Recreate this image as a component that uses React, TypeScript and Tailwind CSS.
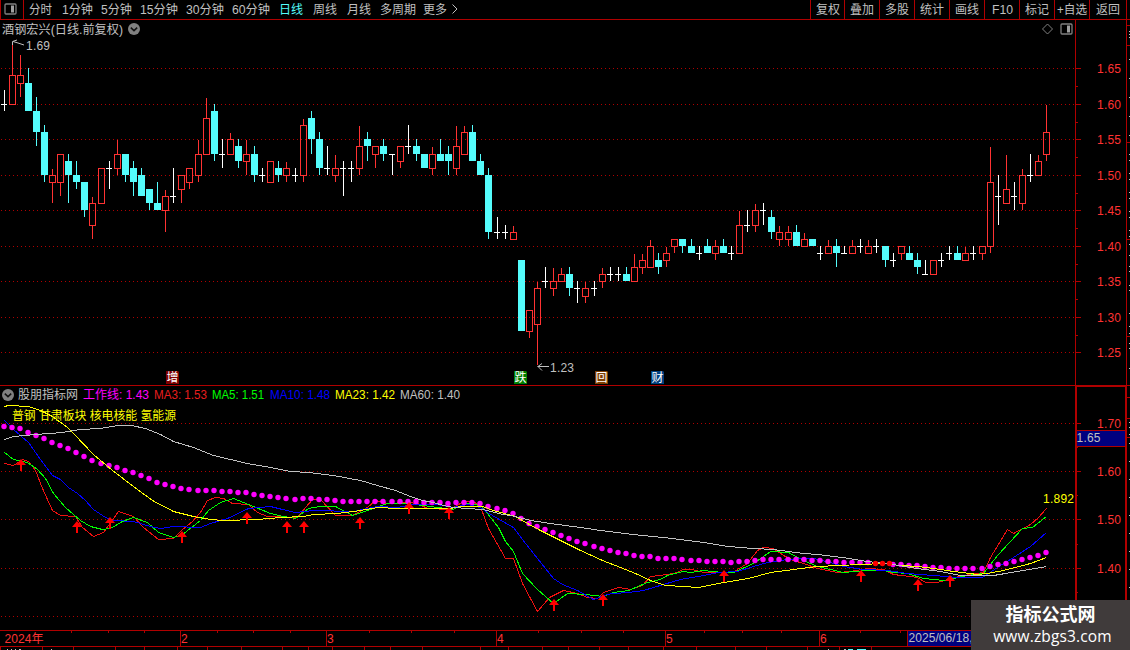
import { Fragment } from 'react';
import type { ReactNode } from 'react';

type Kind = 'up' | 'down' | 'flat';
type Candle = [x: number, high: number, top: number, bottom: number, low: number, kind: Kind];

const LINE = '#b00000';
const UP = '#ff3232';
const DOWN = '#54fcfc';

const PERIODS = [
  { label: '分时', width: 'w-[33px]', text: 23 },
  { label: '1分钟', width: 'w-[39px]', text: 31 },
  { label: '5分钟', width: 'w-[39px]', text: 31 },
  { label: '15分钟', width: 'w-[46px]', text: 38 },
  { label: '30分钟', width: 'w-[46px]', text: 38 },
  { label: '60分钟', width: 'w-[47px]', text: 38 },
  { label: '日线', width: 'w-[34px]', text: 24, active: true },
  { label: '周线', width: 'w-[34px]', text: 24 },
  { label: '月线', width: 'w-[33px]', text: 24 },
  { label: '多周期', width: 'w-[43px]', text: 36 },
  { label: '更多', width: 'w-[27px]', text: 24 },
];

const TOOLS = [
  { label: '复权', width: 'w-[34px]', text: 24 },
  { label: '叠加', width: 'w-[35px]', text: 24 },
  { label: '多股', width: 'w-[35px]', text: 24 },
  { label: '统计', width: 'w-[35px]', text: 24 },
  { label: '画线', width: 'w-[35px]', text: 24 },
  { label: 'F10', width: 'w-[35px]', text: 21 },
  { label: '标记', width: 'w-[35px]', text: 24 },
  { label: '+自选', width: 'w-[35px]', text: 30 },
  { label: '返回', width: 'w-[37px]', text: 24 },
];

const CANDLES: Candle[] = [
  [4, 90, 104, 104, 111, 'flat'],
  [12, 42, 75, 105, 105, 'up'],
  [20, 55, 75, 84, 97, 'up'],
  [28, 68, 83, 111, 111, 'down'],
  [36, 97, 111, 132, 146, 'down'],
  [44, 125, 132, 175, 182, 'down'],
  [52, 169, 175, 183, 203, 'up'],
  [60, 154, 154, 183, 196, 'up'],
  [68, 154, 161, 175, 203, 'down'],
  [76, 161, 175, 182, 189, 'down'],
  [84, 182, 182, 210, 217, 'down'],
  [92, 197, 203, 226, 239, 'up'],
  [101, 168, 168, 204, 204, 'up'],
  [109, 161, 168, 168, 189, 'flat'],
  [117, 140, 154, 169, 175, 'up'],
  [125, 154, 154, 175, 182, 'down'],
  [133, 161, 168, 182, 196, 'down'],
  [141, 168, 175, 196, 196, 'down'],
  [149, 189, 189, 203, 210, 'down'],
  [157, 182, 203, 210, 210, 'down'],
  [165, 190, 196, 211, 232, 'up'],
  [173, 168, 196, 196, 203, 'flat'],
  [181, 175, 175, 190, 203, 'up'],
  [189, 168, 168, 183, 189, 'up'],
  [198, 140, 154, 176, 182, 'up'],
  [206, 98, 118, 155, 155, 'up'],
  [214, 104, 111, 154, 161, 'down'],
  [222, 139, 154, 154, 168, 'flat'],
  [230, 133, 139, 155, 155, 'up'],
  [238, 139, 146, 161, 168, 'down'],
  [246, 140, 154, 162, 175, 'up'],
  [254, 146, 154, 175, 182, 'down'],
  [262, 168, 175, 175, 182, 'flat'],
  [270, 161, 161, 183, 183, 'up'],
  [278, 161, 168, 175, 182, 'down'],
  [286, 162, 168, 176, 182, 'up'],
  [295, 168, 175, 175, 182, 'flat'],
  [303, 119, 125, 176, 182, 'up'],
  [311, 111, 118, 139, 154, 'down'],
  [319, 132, 139, 168, 175, 'down'],
  [327, 146, 168, 168, 175, 'flat'],
  [335, 155, 168, 176, 182, 'up'],
  [343, 161, 168, 168, 196, 'flat'],
  [351, 161, 168, 168, 182, 'flat'],
  [359, 126, 146, 169, 175, 'up'],
  [367, 132, 139, 146, 161, 'down'],
  [375, 146, 146, 155, 168, 'up'],
  [383, 139, 146, 154, 161, 'down'],
  [392, 154, 154, 154, 175, 'flat'],
  [400, 146, 146, 162, 168, 'up'],
  [408, 125, 146, 146, 154, 'flat'],
  [416, 139, 146, 154, 161, 'down'],
  [424, 154, 154, 168, 168, 'down'],
  [432, 147, 154, 169, 175, 'up'],
  [440, 139, 154, 161, 161, 'down'],
  [448, 146, 154, 161, 175, 'down'],
  [456, 126, 146, 169, 175, 'up'],
  [464, 126, 132, 155, 155, 'up'],
  [472, 125, 132, 161, 161, 'down'],
  [480, 154, 161, 175, 175, 'down'],
  [488, 168, 175, 232, 239, 'down'],
  [497, 217, 232, 232, 239, 'flat'],
  [505, 225, 232, 232, 239, 'flat'],
  [513, 226, 232, 240, 240, 'up'],
  [521, 260, 260, 331, 331, 'down'],
  [529, 310, 310, 332, 338, 'up'],
  [537, 282, 288, 325, 365, 'up'],
  [545, 267, 281, 281, 288, 'flat'],
  [553, 268, 281, 289, 296, 'up'],
  [561, 268, 274, 282, 282, 'up'],
  [569, 267, 274, 288, 296, 'down'],
  [577, 281, 288, 288, 303, 'flat'],
  [585, 282, 288, 297, 303, 'up'],
  [594, 281, 288, 288, 296, 'flat'],
  [602, 268, 274, 282, 288, 'up'],
  [610, 267, 274, 274, 281, 'flat'],
  [618, 267, 274, 274, 281, 'flat'],
  [626, 267, 274, 281, 281, 'down'],
  [634, 254, 267, 282, 282, 'up'],
  [642, 254, 260, 268, 274, 'up'],
  [650, 240, 246, 268, 268, 'up'],
  [658, 253, 260, 267, 274, 'down'],
  [666, 247, 253, 261, 267, 'up'],
  [674, 239, 239, 247, 253, 'up'],
  [682, 239, 239, 246, 253, 'down'],
  [691, 239, 246, 253, 253, 'down'],
  [699, 246, 253, 253, 260, 'flat'],
  [707, 239, 246, 253, 253, 'down'],
  [715, 240, 246, 254, 260, 'up'],
  [723, 239, 246, 253, 253, 'down'],
  [731, 246, 253, 253, 260, 'flat'],
  [739, 211, 225, 254, 254, 'up'],
  [747, 210, 225, 225, 232, 'flat'],
  [755, 204, 210, 226, 232, 'up'],
  [763, 203, 210, 210, 225, 'flat'],
  [771, 210, 217, 232, 239, 'down'],
  [779, 226, 232, 240, 246, 'up'],
  [788, 226, 232, 240, 246, 'up'],
  [796, 225, 232, 246, 246, 'down'],
  [804, 233, 239, 247, 247, 'up'],
  [812, 239, 239, 246, 246, 'down'],
  [820, 246, 253, 253, 260, 'flat'],
  [828, 240, 246, 254, 254, 'up'],
  [836, 239, 246, 253, 267, 'down'],
  [844, 246, 253, 253, 254, 'flat'],
  [852, 240, 246, 254, 254, 'up'],
  [860, 239, 246, 246, 253, 'flat'],
  [868, 240, 246, 254, 254, 'up'],
  [876, 239, 246, 246, 253, 'flat'],
  [885, 246, 246, 260, 267, 'down'],
  [893, 253, 260, 260, 267, 'flat'],
  [901, 246, 246, 254, 260, 'up'],
  [909, 246, 253, 260, 260, 'down'],
  [917, 253, 260, 267, 274, 'down'],
  [925, 260, 274, 274, 275, 'flat'],
  [933, 260, 260, 275, 275, 'up'],
  [941, 253, 260, 260, 267, 'flat'],
  [949, 246, 253, 253, 260, 'flat'],
  [957, 246, 253, 260, 260, 'down'],
  [965, 247, 253, 261, 261, 'up'],
  [973, 246, 253, 253, 260, 'flat'],
  [982, 246, 246, 254, 260, 'up'],
  [990, 147, 182, 247, 253, 'up'],
  [998, 175, 196, 196, 225, 'flat'],
  [1006, 155, 189, 204, 204, 'up'],
  [1014, 182, 196, 196, 210, 'flat'],
  [1022, 169, 175, 204, 210, 'up'],
  [1030, 154, 175, 175, 182, 'flat'],
  [1038, 155, 161, 176, 176, 'up'],
  [1046, 105, 132, 155, 161, 'up'],
];

const PRICE_TICKS: [number, string][] = [
  [68, '1.65'],
  [104, '1.60'],
  [139, '1.55'],
  [175, '1.50'],
  [210, '1.45'],
  [246, '1.40'],
  [281, '1.35'],
  [317, '1.30'],
  [352, '1.25'],
];

const MA_TICKS: [number, string][] = [
  [423, '1.70'],
  [471, '1.60'],
  [519, '1.50'],
  [568, '1.40'],
];

const EVENTS = [
  { x: 166, label: '增', fill: '#7f0000' },
  { x: 514, label: '跌', fill: '#007f00' },
  { x: 595, label: '回', fill: '#7f3f00' },
  { x: 651, label: '财', fill: '#003f7f' },
];

const LEGEND = [
  { label: '股朋指标网', color: 'text-[#c0c0c0]', width: 'w-[65px]', text: 60 },
  { label: '工作线: 1.43', color: 'text-[#ff00ff]', width: 'w-[71px]', text: 66 },
  { label: 'MA3: 1.53', color: 'text-[#e81e1e]', width: 'w-[58px]', text: 53 },
  { label: 'MA5: 1.51', color: 'text-[#00ff00]', width: 'w-[58px]', text: 52 },
  { label: 'MA10: 1.48', color: 'text-[#0000ff]', width: 'w-[65px]', text: 60 },
  { label: 'MA23: 1.42', color: 'text-[#ffff00]', width: 'w-[65px]', text: 60 },
  { label: 'MA60: 1.40', color: 'text-[#c0c0c0]', width: 'w-[65px]', text: 60 },
];

const MA3 =
  '4,463 13,465 22,459 28,461 35,470 42,488 52,510 60,515 75,516 82,527 93,536 103,532 118,511 133,516 143,527 158,539 173,538 182,529 192,521 200,512 207,500 215,497 223,498 232,503 248,504 257,512 267,516 297,517 305,507 312,499 320,499 335,515 352,515 367,507 375,500 387,503 407,502 417,503 427,508 450,509 463,501 473,501 480,506 488,528 505,558 513,558 522,583 537,611 549,597 563,590 577,593 587,597 597,598 603,592 618,587 630,589 642,585 650,576 667,574 677,572 682,569 692,569 703,572 732,572 747,563 757,550 763,547 773,548 783,555 793,560 803,563 817,568 837,572 850,571 867,568 883,569 893,574 917,577 925,582 937,582 947,579 963,575 983,572 990,557 1007,529 1013,533 1030,524 1038,517 1046,508';
const MA5 =
  '4,452 13,459 27,462 37,469 45,478 53,493 65,507 80,520 90,526 102,529 110,528 122,521 133,517 147,522 158,532 173,537 182,534 200,520 208,510 220,502 233,498 253,506 270,513 283,516 295,518 308,508 320,506 335,506 352,515 370,509 387,503 407,503 430,506 452,509 467,503 480,505 487,513 498,527 505,541 513,551 522,573 537,589 553,603 567,593 585,594 603,596 613,592 628,590 647,582 660,579 667,575 682,571 690,572 703,570 722,572 733,572 753,563 770,551 788,552 803,560 817,566 830,569 843,572 867,570 883,570 893,572 907,573 923,578 943,580 967,575 983,573 997,555 1022,528 1032,527 1046,516';
const MA10 =
  '4,420 13,429 28,442 40,459 52,475 60,479 68,487 77,493 85,500 93,509 105,517 113,520 133,521 150,526 160,528 173,526 200,527 210,523 227,518 248,508 270,506 282,509 295,512 313,510 353,511 367,508 377,506 397,507 413,504 437,504 452,507 467,504 480,507 487,512 497,518 513,527 522,539 537,558 553,578 562,584 577,590 593,599 607,594 613,593 628,592 643,590 663,584 680,579 703,575 718,572 737,571 753,566 767,562 787,559 800,558 813,558 830,562 843,566 863,569 887,570 907,573 933,575 957,577 982,577 1000,565 1013,557 1030,546 1046,532';
const MA23 =
  '4,406 8,405 28,406 40,410 52,416 67,427 73,433 93,454 112,470 133,486 152,500 173,511 193,516 210,519 223,520 257,519 280,517 303,516 313,514 337,513 360,510 377,507 397,508 450,508 460,506 482,506 493,510 515,516 527,523 540,530 560,540 580,550 602,560 620,567 635,573 650,580 665,585 683,586 698,587 718,583 748,578 770,572 793,569 817,566 860,564 883,563 900,565 918,566 933,568 953,571 977,574 987,573 1003,570 1030,563 1046,557';
const MA60 =
  '4,439 13,436 24,435 35,434 62,432 80,429 100,428 117,425 131,425 145,428 160,434 173,441 193,447 213,455 247,463 270,467 290,471 308,472 333,475 360,480 377,485 395,490 410,496 422,500 433,502 443,505 453,507 482,509 503,514 515,516 530,520 550,523 580,527 600,530 632,534 663,537 703,542 728,546 753,548 773,549 803,553 817,554 842,557 867,561 892,564 917,568 940,571 960,575 993,575 1017,571 1046,566';

// One value per candle
const WORK_LINE = [
  426, 427, 428, 432, 435, 438, 442, 445, 448, 452, 456, 460, 463, 465, 467, 470, 472, 475, 478, 482,
  484, 486, 488, 489, 490, 490, 490, 491, 491, 492, 492, 494, 495, 496, 497, 498, 499, 498, 498, 499,
  499, 500, 501, 501, 501, 501, 501, 501, 501, 501, 501, 501, 502, 502, 502, 503, 502, 502, 502, 503,
  506, 508, 510, 513, 518, 523, 526, 529, 532, 535, 538, 541, 543, 546, 548, 550, 552, 553, 555, 556,
  556, 558, 558, 558, 559, 560, 560, 561, 561, 561, 562, 561, 561, 560, 559, 559, 559, 559, 559, 559,
  560, 560, 561, 561, 562, 562, 562, 562, 563, 563, 564, 564, 565, 565, 566, 567, 567, 568, 568, 568,
  568, 568, 566, 564, 563, 561, 559, 557, 555, 552,
];

const ARROWS = [
  [21, 459], [77, 521], [110, 517], [182, 531], [247, 512], [287, 521], [304, 521], [360, 517],
  [409, 502], [449, 507], [554, 599], [603, 594], [724, 570], [861, 570], [918, 579], [950, 575],
];

const MONTHS: [number, string][] = [
  [180, '2'],
  [326, '3'],
  [496, '4'],
  [665, '5'],
  [819, '6'],
];
const WEEK_TICKS = [71, 108, 144, 217, 253, 290, 369, 411, 454, 538, 581, 623, 704, 742, 781, 860, 900];
const FOOT_TICKS = [
  0, 42, 73, 115, 144, 177, 207, 241, 282, 308, 332, 364, 390, 422, 480, 508, 542, 568, 599, 628, 663,
  696, 735, 766, 807, 839, 871,
];

function Label({ text, width, size = 12 }: { text: string; width: number; size?: number }) {
  return (
    <svg width={width} height={16} className="block shrink-0 overflow-visible">
      <text x={0} y={12.5} fontSize={size} fill="currentColor" textLength={width} lengthAdjust="spacingAndGlyphs">
        {text}
      </text>
    </svg>
  );
}

function PanelIcon() {
  return (
    <svg width="13" height="12" viewBox="0 0 13 12" className="block shrink-0">
      <rect x="1" y="1" width="11" height="10" rx="1" fill="none" stroke="#808080" strokeWidth="1.3" />
      <rect x="7" y="2.500" width="3" height="7" fill="#a0a0a0" />
    </svg>
  );
}

function CircleChevron() {
  return (
    <svg width="12" height="12" viewBox="0 0 12 12" className="block shrink-0">
      <circle cx="6" cy="6" r="6" fill="#808080" />
      <path d="M2.8 4.6 6 7.6l3.2-3" fill="none" stroke="#101010" strokeWidth="1.5" />
    </svg>
  );
}

function GridLines({ rows, to }: { rows: number[]; to: number }) {
  return (
    <g stroke={LINE} strokeDasharray="1 3">
      {rows.map((y) => (
        <line key={y} x1={1} x2={to} y1={y + 0.5} y2={y + 0.5} />
      ))}
    </g>
  );
}

function CandleShape({ candle }: { candle: Candle }) {
  const [x, high, top, bottom, low, kind] = candle;
  if (kind === 'flat') {
    return (
      <g fill="#fff">
        <rect x={x} y={high} width={1} height={low - high} />
        <rect x={x - 3} y={top} width={6} height={1} />
      </g>
    );
  }
  if (kind === 'down') {
    return (
      <g fill={DOWN}>
        <rect x={x} y={high} width={1} height={low - high} />
        <rect x={x - 3} y={top} width={7} height={bottom - top} />
      </g>
    );
  }
  return (
    <g fill={UP}>
      <rect x={x} y={high} width={1} height={top - high} />
      <rect x={x} y={bottom} width={1} height={low - bottom} />
      <rect x={x - 2.5} y={top + 0.5} width={6} height={bottom - top - 1} fill="none" stroke={UP} />
    </g>
  );
}

function TopBar() {
  return (
    <header className="flex h-5 shrink-0 border-b border-[#b00000] text-[#c0c0c0]">
      <div className="flex w-6 items-start border-x border-[#b00000] pl-[3px] pt-[3px]">
        <PanelIcon />
      </div>
      <nav className="flex flex-1 items-start pl-[5px] pt-px">
        {PERIODS.map((item) => (
          <div key={item.label} className={`${item.width} shrink-0 ${item.active ? 'text-[#54fcfc]' : ''}`}>
            <Label text={item.label} width={item.text} />
          </div>
        ))}
        <svg width="8" height="12" viewBox="0 0 8 12" className="mt-0.5 block">
          <path d="M2.500 1.500 7 6l-4.500 4.500" fill="none" stroke="#c0c0c0" />
        </svg>
      </nav>
      <div className="flex">
        {TOOLS.map((tool) => (
          <div key={tool.label} className={`${tool.width} flex justify-center border-l border-[#b00000] pt-px`}>
            <Label text={tool.label} width={tool.text} />
          </div>
        ))}
      </div>
      <div className="w-1 border-l border-[#b00000]" />
    </header>
  );
}

function Axis({
  ticks,
  from,
  height,
  minor,
  children,
}: {
  ticks: [number, string][];
  from: number;
  height: number;
  minor: number[];
  children?: ReactNode;
}) {
  return (
    <svg width={55} height={height} viewBox={`1075 ${from} 55 ${height}`} className="block shrink-0">
      <g fill={LINE} shapeRendering="crispEdges">
        <rect x={1075} y={from} width={1} height={height} />
        <rect x={1126} y={from} width={1} height={height} />
        {ticks.map(([y]) => (
          <rect key={y} x={1076} y={y} width={5} height={1} />
        ))}
        {minor.map((y) => (
          <rect key={y} x={1076} y={y} width={2} height={1} />
        ))}
      </g>
      {ticks.map(([y, label]) => (
        <text key={y} x={1097} y={y + 5} fontSize={12} fill={UP} textLength={24}>
          {label}
        </text>
      ))}
      {children}
    </svg>
  );
}

function EdgeMarks({ red, gray }: { red: number[]; gray: number[] }) {
  return (
    <g shapeRendering="crispEdges">
      {red.map((y) => (
        <rect key={y} x={1127} y={y} width={3} height={1} fill={LINE} />
      ))}
      {gray.map((y) => (
        <rect key={y} x={1129} y={y} width={1} height={1} fill="#c0c0c0" />
      ))}
    </g>
  );
}

function PricePanel() {
  return (
    <section className="flex h-[365px] shrink-0">
      <div className="relative w-[1075px]">
        <svg width={1075} height={365} viewBox="0 20 1075 365" className="block">
          <g shapeRendering="crispEdges">
            <GridLines rows={PRICE_TICKS.map(([y]) => y)} to={1075} />
            {CANDLES.map((candle) => (
              <CandleShape key={candle[0]} candle={candle} />
            ))}
          </g>
          <g fill="none" stroke="#c0c0c0">
            <path d="M12.500 45V41.500L17 40M13 41.500l5 1.500 6 2M537.500 366.500H549M542 363.500l-4 3 4 4" />
          </g>
          <text x={26} y={50} fontSize={12} fill="#c0c0c0" textLength={24}>
            1.69
          </text>
          <text x={550} y={372} fontSize={12} fill="#c0c0c0" textLength={24}>
            1.23
          </text>
          {EVENTS.map((event) => (
            <Fragment key={event.x}>
              <path d={`M${event.x} 371h12l1 1v12h-13z`} fill={event.fill} />
              <text x={event.x + 0.5} y={382} fontSize={12} fill="#fff">
                {event.label}
              </text>
            </Fragment>
          ))}
        </svg>
        <div className="absolute inset-x-0 top-0 flex items-center justify-between pl-[2px] pr-[2px] pt-px text-[#c0c0c0]">
          <div className="flex items-center gap-[5px]">
            <Label text="酒钢宏兴(日线.前复权)" width={121} />
            <CircleChevron />
          </div>
          <div className="flex items-center gap-[6px]">
            <svg width="12" height="12" viewBox="0 0 12 12" className="block">
              <path d="M5.500 1l5 5-5 5-5-5z" fill="none" stroke="#808080" />
            </svg>
            <PanelIcon />
          </div>
        </div>
      </div>
      <Axis ticks={PRICE_TICKS} from={20} height={365} minor={[86, 122, 157, 193, 228, 264, 299, 335]}>
        <EdgeMarks
          red={[25, 45, 142, 239, 336]}
          gray={[31, 34, 37, 59, 78, 97, 116, 135, 154, 160, 173, 179, 192, 198, 211, 217, 230, 236, 244, 255, 266, 271, 285, 290, 313, 326, 333, 343, 348, 368]}
        />
      </Axis>
    </section>
  );
}

function IndicatorPanel() {
  return (
    <section className="flex h-[245px] shrink-0 border-t border-[#b00000]">
      <div className="relative w-[1075px]">
        <svg width={1075} height={244} viewBox="0 386 1075 244" className="block">
          <g shapeRendering="crispEdges" fill="none">
            <GridLines rows={[423, 471, 519, 568, 616]} to={1075} />
            <g transform="translate(.5 .5)">
              <polyline points={MA3} stroke="#f01010" />
              <polyline points={MA5} stroke="#00ff00" />
              <polyline points={MA10} stroke="#0000ff" />
            </g>
          </g>
          <g fill="#ff00ff">
            {CANDLES.map(([x], i) =>
              x === 876 || x === 885 ? null : <circle key={x} cx={x} cy={WORK_LINE[i] + 0.5} r={2.7} />,
            )}
          </g>
          <g shapeRendering="crispEdges" fill="none" transform="translate(.5 .5)">
            <polyline points={MA23} stroke="#ffff00" />
            <polyline points={MA60} stroke="#c0c0c0" />
          </g>
          <g fill="#ff0000">
            {[875.5, 882.5, 889.5].map((x) => (
              <circle key={x} cx={x} cy={563.5} r={2.7} />
            ))}
            {ARROWS.map(([x, y]) => (
              <path key={x} d={`M${x} ${y}l5 6h-4v6h-2v-6h-4z`} />
            ))}
          </g>
          <text x={12} y={419.500} fontSize={12} fill="#ffff00" textLength={164} lengthAdjust="spacingAndGlyphs">
            普钢 甘肃板块 核电核能 氢能源
          </text>
          <text x={1043} y={503} fontSize={12} fill="#ffff00" textLength={31}>
            1.892
          </text>
        </svg>
        <div className="absolute left-[2px] top-0 flex items-center">
          <div className="mr-[3.500px] pt-0.5">
            <CircleChevron />
          </div>
          {LEGEND.map((item) => (
            <div key={item.label} className={`${item.width} shrink-0 ${item.color}`}>
              <Label text={item.label} width={item.text} />
            </div>
          ))}
        </div>
      </div>
      <Axis ticks={MA_TICKS} from={386} height={244} minor={[447, 495, 544, 592]}>
        <g fill={LINE} shapeRendering="crispEdges">
          <rect x={1076} y={386} width={51} height={1} />
          <rect x={1076} y={386} width={1} height={244} />
          <rect x={1125} y={386} width={1} height={244} />
          <rect x={1076} y={430} width={50} height={17} />
          <rect x={1077} y={431} width={48} height={15} fill="#00007f" />
        </g>
        <text x={1076.500} y={442} fontSize={12} fill="#c0c0c0" textLength={24}>
          1.65
        </text>
        <EdgeMarks red={[397, 418, 437]} gray={[422, 427, 434, 443, 461, 479, 497, 515, 533, 551, 569, 587]} />
      </Axis>
    </section>
  );
}

function DateBar() {
  return (
    <footer className="h-5 shrink-0">
      <svg width={1130} height={20} viewBox="0 630 1130 20" className="block">
        <g fill={LINE} shapeRendering="crispEdges">
          <rect x={0} y={630} width={1127} height={1} />
          <rect x={0} y={646} width={1127} height={1} />
          {WEEK_TICKS.map((x) => (
            <rect key={x} x={x} y={631} width={1} height={2} />
          ))}
          {FOOT_TICKS.map((x) => (
            <rect key={x} x={x} y={647} width={1} height={3} />
          ))}
          {MONTHS.map(([x]) => (
            <rect key={x} x={x} y={631} width={1} height={15} />
          ))}
          <rect x={907} y={631} width={1} height={15} />
          <rect x={908} y={631} width={63} height={15} fill="#00007f" />
          <rect x={848} y={649} width={5} height={1} fill={DOWN} />
          <rect x={857} y={649} width={9} height={1} fill={DOWN} />
          <path d="M7 649h1v1h-1zM11 649h1v1h-1zM15 649h1v1h-1zM19 649h2v1h-2zM51 649h1v1h-1zM828 649h1v1h-1zM844 649h2v1h-2z" fill="#c0c0c0" />
        </g>
        <g fontSize={12} fill={UP}>
          <text x={4.500} y={643} textLength={39} lengthAdjust="spacingAndGlyphs">
            2024年
          </text>
          {MONTHS.map(([x, label]) => (
            <text key={x} x={x + 1} y={643}>
              {label}
            </text>
          ))}
        </g>
        <text x={908.500} y={642} fontSize={12} fill="#c0c0c0" textLength={64}>
          2025/06/18,
        </text>
      </svg>
    </footer>
  );
}

export default function App() {
  return (
    <div className="relative flex h-[650px] w-[1130px] flex-col overflow-hidden bg-black font-['Liberation_Sans','Noto_Sans_CJK_SC',sans-serif]">
      <TopBar />
      <PricePanel />
      <IndicatorPanel />
      <DateBar />
      <div className="absolute bottom-0 right-0 flex h-[50px] w-[159px] flex-col items-center bg-[#403b3b] pt-[3px] text-white">
        <div className="text-[18px] leading-6 font-bold">指标公式网</div>
        <div className="pl-1 font-['Open_Sans',sans-serif] text-[15.5px] leading-[18px] tracking-[0.15px]">
          www.zbgs3.com
        </div>
      </div>
    </div>
  );
}
